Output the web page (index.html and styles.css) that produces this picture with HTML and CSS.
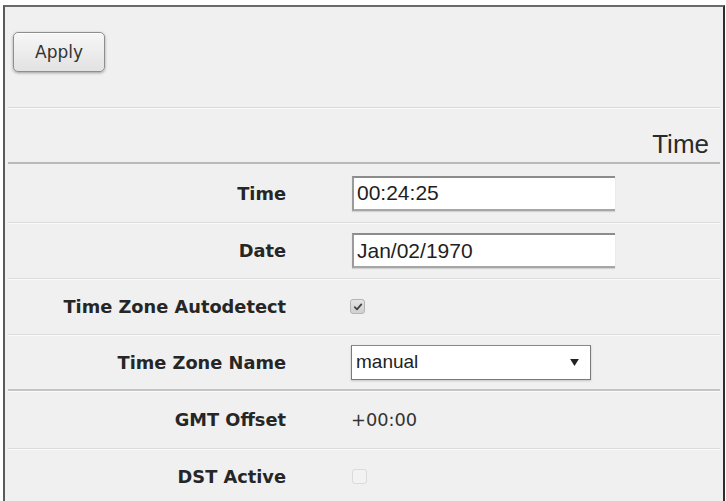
FILE: index.html
```html
<!DOCTYPE html>
<html lang="en">
<head>
<meta charset="utf-8">
<title>Time</title>
<link rel="stylesheet" href="styles.css">
</head>
<body>
<div class="frame">
  <div class="toolbar">
    <button class="btn" type="button">Apply</button>
  </div>
  <div class="section-head">Time</div>
  <div class="form">
    <div class="row row--first">
      <label class="label" for="f-time">Time</label>
      <div class="value"><input id="f-time" class="field" type="text" value="00:24:25"></div>
    </div>
    <div class="row">
      <label class="label" for="f-date">Date</label>
      <div class="value"><input id="f-date" class="field" type="text" value="Jan/02/1970"></div>
    </div>
    <div class="row">
      <span class="label">Time Zone Autodetect</span>
      <div class="value">
        <span class="check check--on">
          <svg viewBox="0 0 10 10" width="10" height="10"><path d="M1.8 5.2 L4 7.4 L8.3 2.4" fill="none" stroke="#444" stroke-width="1.8" stroke-linecap="round" stroke-linejoin="round"/></svg>
        </span>
      </div>
    </div>
    <div class="row row--split">
      <span class="label">Time Zone Name</span>
      <div class="value">
        <div class="select">
          <span class="select-text">manual</span>
          <svg class="select-arrow" viewBox="0 0 10 8" width="9" height="7"><path d="M0 0 H10 L5 8 Z" fill="#222"/></svg>
        </div>
      </div>
    </div>
    <div class="row row--tall">
      <span class="label">GMT Offset</span>
      <div class="value"><span class="plain">+00:00</span></div>
    </div>
    <div class="row">
      <span class="label">DST Active</span>
      <div class="value"><span class="check check--off"></span></div>
    </div>
  </div>
</div>
</body>
</html>
```

FILE: styles.css
```css
html, body {
  margin: 0;
  padding: 0;
  background: #ffffff;
}

body {
  font-family: "DejaVu Sans", Verdana, sans-serif;
  color: #222;
  overflow: hidden;
  height: 501px;
}

.frame {
  box-sizing: border-box;
  margin: 5px 1px 0 3px;
  height: 496px;
  overflow: hidden;
  background: #f0f0f0;
  border-top: 2px solid #6a6a6a;
  border-left: 2px solid #5a5a5a;
  border-right: 2px solid #2e2e2e;
  padding: 0 3px;
}

.toolbar {
  height: 75px;
  padding: 25px 0 0 5px;
  border-bottom: 1px solid #dadada;
  box-shadow: 0 1px 0 #fbfbfb;
}

.btn {
  width: 92px;
  height: 40px;
  font-family: "DejaVu Sans", Verdana, sans-serif;
  font-size: 17px;
  color: #333;
  background: linear-gradient(#f7f7f7, #e2e2e2);
  border: 1px solid #8e8e8e;
  border-radius: 5px;
  box-shadow: 0 1px 3px rgba(0, 0, 0, 0.35), inset 0 1px 0 #fff;
  padding: 0;
}

.section-head {
  box-sizing: border-box;
  height: 55px;
  margin-top: 1px;
  display: flex;
  align-items: flex-end;
  justify-content: flex-end;
  padding: 0 11px 5px 0;
  font-family: "Liberation Sans", Arial, sans-serif;
  font-size: 26px;
  line-height: 1;
  color: #2a2a2a;
  border-bottom: 2px solid #b9b9b9;
}

.row {
  display: grid;
  grid-template-columns: 278px 1fr;
  column-gap: 65px;
  align-items: center;
  height: 55px;
  border-bottom: 1px solid #dcdcdc;
  box-shadow: 0 1px 0 #fafafa;
}

.row--first {
  height: 58px;
}

.row--tall {
  height: 57px;
}

.row--split {
  height: 54px;
  border-bottom: 2px solid #c4c4c4;
}

.label {
  text-align: right;
  font-weight: bold;
  font-size: 17.8px;
  color: #262626;
}

.value {
  display: flex;
  align-items: center;
}

.field {
  box-sizing: border-box;
  width: 263px;
  height: 35px;
  margin: 0 0 0 1px;
  padding: 0 4px 0 3px;
  font-family: "Liberation Sans", Arial, sans-serif;
  font-size: 21px;
  color: #1e1e1e;
  background: #fff;
  border-top: 2px solid #8c8c8c;
  border-left: 2px solid #9a9a9a;
  border-bottom: 2px solid #a6a6a6;
  border-right: 0;
  box-shadow: 0 1px 1px rgba(0, 0, 0, 0.12);
  outline: none;
}

.check {
  box-sizing: border-box;
  display: inline-flex;
  align-items: center;
  justify-content: center;
  width: 15px;
  height: 15px;
  border-radius: 3px;
}

.check--on {
  margin-left: -1px;
  background: linear-gradient(#e4e4e4, #d0d0d0);
  border: 1px solid #b4b4b4;
}

.check--off {
  margin-left: 1px;
  background: #f2f2f2;
  border: 1px solid #dadada;
}

.select {
  box-sizing: border-box;
  width: 240px;
  height: 35px;
  display: flex;
  align-items: center;
  justify-content: space-between;
  padding: 0 11px 0 4px;
  background: #fff;
  border: 1px solid #7a7a7a;
  border-top-color: #8a8a8a;
  box-shadow: 0 1px 2px rgba(0, 0, 0, 0.18);
}

.select-text {
  font-family: "Liberation Sans", Arial, sans-serif;
  font-size: 19px;
  color: #222;
}

.select-arrow {
  display: block;
}

.plain {
  font-size: 17.8px;
  color: #333;
}
```
